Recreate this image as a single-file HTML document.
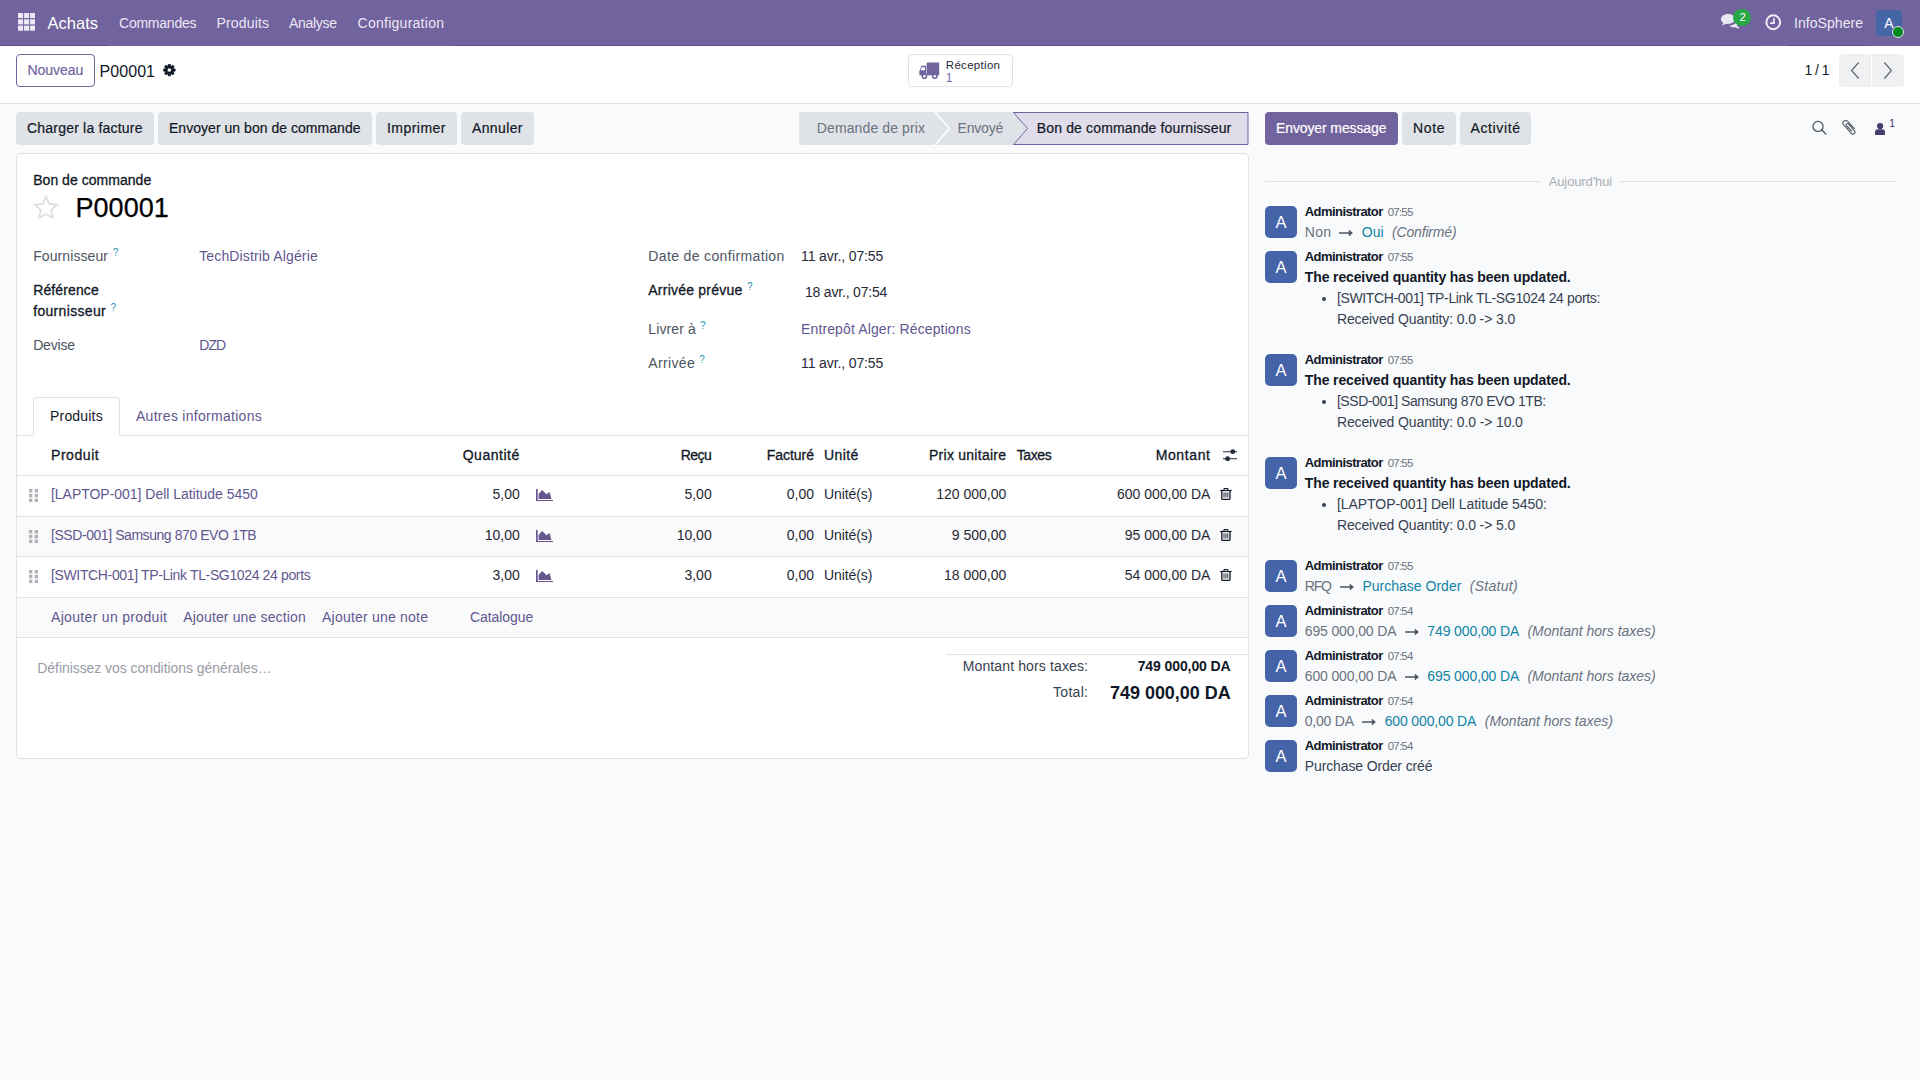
<!DOCTYPE html>
<html lang="fr">
<head>
<meta charset="utf-8">
<title>Odoo - P00001</title>
<style>
*{box-sizing:border-box}
html,body{margin:0;padding:0}
body{width:1920px;height:1080px;overflow:hidden;position:relative;background:#f9fafb;font-family:"Liberation Sans",sans-serif;font-size:14px;color:#374151}
nav,header,main,aside,section,div,span,a,button,svg.i,h1,ul,li,table{position:absolute;margin:0;padding:0}
.t{white-space:nowrap;line-height:1;font-weight:400;text-decoration:none}
button{border:0;font:inherit;cursor:pointer}
.navbar{background:#71639e}
.cp{background:#fff;border-bottom:1px solid #dfe2e6}
.btn{border-radius:4px;background:#dfe2e6}
.btn-primary{background:#71639e}
.btn-outline{background:#fff;border:1px solid #71639e;border-radius:4px}
.sheet{background:#fff;border:1px solid #dfe2e6;border-radius:5px}
.line{background:#dfe2e6}
.avatar{background:#4563a8;border-radius:5px}

</style>
</head>
<body>
<nav class="navbar" style="left:0px;top:0px;width:1920px;height:46px;">
<div class="nb" style="left:0px;top:45px;width:109px;height:1px;background:#5d5286"></div>
<div class="nb" style="left:454px;top:45px;width:1305px;height:1px;background:#5d5286"></div>
<div class="nb" style="left:1787px;top:45px;width:83px;height:1px;background:#5d5286"></div>
<svg class="i" style="left:17.8px;top:13.2px;" width="17.5" height="18" viewBox="0 0 17.5 18"><g fill="#ece9f4"><rect x="0" y="0" width="5.1" height="5.1"/><rect x="6.05" y="0" width="5.1" height="5.1"/><rect x="12.1" y="0" width="5.1" height="5.1"/><rect x="0" y="6.3" width="5.1" height="5.1"/><rect x="6.05" y="6.3" width="5.1" height="5.1"/><rect x="12.1" y="6.3" width="5.1" height="5.1"/><rect x="0" y="12.6" width="5.1" height="5.1"/><rect x="6.05" y="12.6" width="5.1" height="5.1"/><rect x="12.1" y="12.6" width="5.1" height="5.1"/></g></svg>
<a class="t" style="left:47.50px;top:14.50px;letter-spacing:0.009px;font-size:16.5px;color:#fff">Achats</a>
<a class="t" style="left:119.00px;top:16.00px;letter-spacing:-0.234px;color:#ebe8f3">Commandes</a>
<a class="t" style="left:216.50px;top:16.00px;letter-spacing:0.163px;color:#ebe8f3">Produits</a>
<a class="t" style="left:289.00px;top:16.00px;letter-spacing:-0.302px;color:#ebe8f3">Analyse</a>
<a class="t" style="left:357.50px;top:16.00px;letter-spacing:0.268px;color:#ebe8f3">Configuration</a>
<svg class="i" style="left:1721px;top:14px;" width="18" height="16" viewBox="0 0 18 16"><g fill="#e9e6f3"><path d="M7 0C3.1 0 0 2.3 0 5.2c0 1.5.9 2.9 2.3 3.8-.2.9-.7 1.700-1.500 2.400 1.700-.1 3.100-.700 4.200-1.600.600.100 1.300.200 2 .2 3.900 0 7-2.300 7-5.200S10.900 0 7 0z"/><path d="M15.600 12.300c1.400-.900 2.400-2.200 2.400-3.700 0-1.400-.800-2.600-2.100-3.500.100.400.100.700.100 1.100 0 3.200-3.300 5.900-7.600 6.200 1.100 1 2.800 1.600 4.600 1.600.700 0 1.300-.100 1.900-.2 1 .900 2.300 1.500 3.900 1.600-.700-.700-1.200-1.500-1.400-2.400z" transform="translate(0,-.6)"/></g></svg>
<div class="badge" style="left:1732.6px;top:9px;width:18.6px;height:17.2px;border-radius:9px;background:#28a745"></div>
<span class="t" style="left:1739.40px;top:12.00px;font-size:11.5px;color:#fff">2</span>
<svg class="i" style="left:1765px;top:14px;" width="16.5" height="16.5" viewBox="0 0 16.5 16.5"><circle cx="8.25" cy="8.25" r="6.9" fill="none" stroke="#f1eff7" stroke-width="2"/><path d="M8.9 4.200v5h-3.700" fill="none" stroke="#f1eff7" stroke-width="1.7"/></svg>
<a class="t" style="left:1794.00px;top:16.00px;letter-spacing:0.056px;color:#ebe8f3">InfoSphere</a>
<div class="avatar" style="left:1876px;top:10px;width:26px;height:26px;background:#4665a7;border-radius:4px"></div>
<span class="t" style="left:1884.30px;top:16.00px;color:#fff">A</span>
<div class="status" style="left:1892px;top:26px;width:12px;height:12px;border-radius:6px;background:#008a1c;border:1px solid #e6e3ef"></div>
</nav>
<header class="cp" style="left:0px;top:46px;width:1920px;height:58px;">
<button class="btn-outline" style="left:16px;top:8px;width:79px;height:33px;"></button>
<span class="t" style="left:27.50px;top:17.00px;letter-spacing:-0.058px;color:#71639e;-webkit-text-stroke:0.2px currentColor">Nouveau</span>
<span class="t" style="left:99.50px;top:17.70px;letter-spacing:0.066px;font-size:16px;color:#111827">P00001</span>
<svg class="i" style="left:162.4px;top:17.5px;" width="14" height="13" viewBox="0 0 14 13"><path fill="#111827" fill-rule="evenodd" stroke="#111827" stroke-width=".6" stroke-linejoin="round" d="M6.05 1.85 L6.23 0.21 L8.47 0.21 L8.65 1.85 L9.40 2.16 L10.69 1.12 L12.28 2.71 L11.24 4.00 L11.55 4.75 L13.19 4.93 L13.19 7.17 L11.55 7.35 L11.24 8.10 L12.28 9.39 L10.69 10.98 L9.40 9.94 L8.65 10.25 L8.47 11.89 L6.23 11.89 L6.05 10.25 L5.30 9.94 L4.01 10.98 L2.42 9.39 L3.46 8.10 L3.15 7.35 L1.51 7.17 L1.51 4.93 L3.15 4.75 L3.46 4.00 L2.42 2.71 L4.01 1.12 L5.30 2.16Z M5.25 6.05a2.1 2.1 0 1 0 4.2 0a2.1 2.1 0 1 0 -4.2 0Z"/></svg>
<button class="stat" style="left:908px;top:8px;width:105px;height:33px;border:1px solid #dfe2e6;border-radius:4px;background:#fff"></button>
<svg class="i" style="left:919.4px;top:16.1px;" width="21" height="17.2" viewBox="0 0 21 17.200"><g fill="#71639e"><path d="M8.400.400H19.500a.7.700 0 0 1 .7.700V13.300H7.600V1.200a.8.800 0 0 1 .8-.8z"/><path fill-rule="evenodd" d="M7.100 3.800V13.300H.3V9.300L2 4.900c.2-.6.700-1.100 1.400-1.100zM5.900 5.200H3.300c-.3 0-.5.200-.6.400L1.600 8.300H5.900z"/><circle cx="5.400" cy="14.200" r="2.900"/><circle cx="15.800" cy="14.200" r="2.900"/><circle cx="5.400" cy="14.200" r="1.300" fill="#fff"/><circle cx="15.800" cy="14.200" r="1.300" fill="#fff"/></g></svg>
<span class="t" style="left:945.80px;top:13.80px;letter-spacing:0.300px;font-size:11.5px;color:#1f2937">Réception</span>
<span class="t" style="left:945.80px;top:25.70px;font-size:12px;color:#71639e">1</span>
<span class="t" style="left:1804.50px;top:16.70px;letter-spacing:-0.562px;color:#111827">1 / 1</span>
<button class="pg" style="left:1839px;top:8px;width:32px;height:33px;background:#eff0f2;border-radius:4px 0 0 4px"></button>
<button class="pg" style="left:1872px;top:8px;width:32px;height:33px;background:#eff0f2;border-radius:0 4px 4px 0"></button>
<svg class="i" style="left:1850.3px;top:16.4px;" width="10" height="17" viewBox="0 0 10 17"><path d="M8.600.500L1.600 8.500l7 8" fill="none" stroke="#5c6370" stroke-width="1.150"/></svg>
<svg class="i" style="left:1883.2px;top:16.4px;" width="10" height="17" viewBox="0 0 10 17"><path d="M1.400.500L8.400 8.500l-7 8" fill="none" stroke="#5c6370" stroke-width="1.150"/></svg>
</header>
<main class="form" style="left:0px;top:104px;width:1256px;height:976px;">
<button class="btn" style="left:16px;top:8px;width:137.7px;height:33px;"></button>
<span class="t" style="left:27.00px;top:17.00px;letter-spacing:0.202px;color:#111827;-webkit-text-stroke:0.2px currentColor">Charger la facture</span>
<button class="btn" style="left:158px;top:8px;width:213.7px;height:33px;"></button>
<span class="t" style="left:169.00px;top:17.00px;letter-spacing:0.033px;color:#111827;-webkit-text-stroke:0.2px currentColor">Envoyer un bon de commande</span>
<button class="btn" style="left:376px;top:8px;width:81px;height:33px;"></button>
<span class="t" style="left:387.00px;top:17.00px;letter-spacing:0.467px;color:#111827;-webkit-text-stroke:0.2px currentColor">Imprimer</span>
<button class="btn" style="left:461px;top:8px;width:72.7px;height:33px;"></button>
<span class="t" style="left:472.00px;top:17.00px;letter-spacing:0.372px;color:#111827;-webkit-text-stroke:0.2px currentColor">Annuler</span>
<svg class="i" style="left:799px;top:8px" width="450" height="33" viewBox="0 0 450 33"><path d="M3 0H214L228 16.500 214 33H3a3 3 0 0 1-3-3V3a3 3 0 0 1 3-3z" fill="#dfe2e6"/><path d="M136 0l14.500 16.500L136 33" fill="none" stroke="#fff" stroke-width="1.600"/><path d="M214.500.500H449V32.500H214.500L228.500 16.500z" fill="#e0dcea" stroke="#71639e" stroke-width="1"/></svg>
<span class="t" style="left:816.80px;top:17.00px;letter-spacing:0.113px;color:#6b7280">Demande de prix</span>
<span class="t" style="left:957.50px;top:17.00px;letter-spacing:-0.181px;color:#6b7280">Envoyé</span>
<span class="t" style="left:1036.80px;top:17.00px;letter-spacing:0.147px;color:#111827;-webkit-text-stroke:0.2px currentColor">Bon de commande fournisseur</span>
<section class="sheet" style="left:16px;top:49px;width:1232.5px;height:606px;"></section>
<span class="t" style="left:33.20px;top:69.00px;letter-spacing:0.033px;color:#111827;-webkit-text-stroke:0.3px currentColor">Bon de commande</span>
<svg class="i" style="left:32px;top:90.1px;" width="28" height="28" viewBox="0 0 28 28"><path fill="#dcdfe3" fill-rule="evenodd" d="M14.00 0.60 L17.88 8.96 L27.03 10.07 L20.28 16.34 L22.05 25.38 L14.00 20.90 L5.95 25.38 L7.72 16.34 L0.97 10.07 L10.12 8.96Z M14.00 5.10 L16.65 10.76 L22.84 11.53 L18.28 15.79 L19.47 21.92 L14.00 18.90 L8.53 21.92 L9.72 15.79 L5.16 11.53 L11.35 10.76Z"/></svg>
<h1 class="t" style="left:75.50px;top:91.40px;letter-spacing:0.041px;font-size:27px;color:#000;-webkit-text-stroke:0.25px currentColor">P00001</h1>
<span class="t" style="left:33.20px;top:144.60px;letter-spacing:0.088px;color:#4b5563">Fournisseur</span>
<span class="t" style="left:112.70px;top:144.00px;font-size:10px;color:#2a93b5">?</span>
<a class="t" style="left:199.20px;top:144.60px;letter-spacing:0.142px;color:#5f5790">TechDistrib Algérie</a>
<span class="t" style="left:33.20px;top:179.00px;letter-spacing:0.113px;color:#111827;-webkit-text-stroke:0.3px currentColor">Référence</span>
<span class="t" style="left:33.20px;top:199.50px;letter-spacing:0.323px;color:#111827;-webkit-text-stroke:0.3px currentColor">fournisseur</span>
<span class="t" style="left:110.50px;top:198.90px;font-size:10px;color:#2a93b5">?</span>
<span class="t" style="left:33.20px;top:233.50px;letter-spacing:-0.199px;color:#4b5563">Devise</span>
<a class="t" style="left:199.20px;top:233.50px;letter-spacing:-0.891px;color:#5f5790">DZD</a>
<span class="t" style="left:648.30px;top:144.50px;letter-spacing:0.359px;color:#4b5563">Date de confirmation</span>
<span class="t" style="left:801.00px;top:144.50px;letter-spacing:-0.116px;color:#1f2937">11 avr., 07:55</span>
<span class="t" style="left:648.30px;top:179.00px;letter-spacing:0.227px;color:#111827;-webkit-text-stroke:0.3px currentColor">Arrivée prévue</span>
<span class="t" style="left:747.00px;top:178.40px;font-size:10px;color:#2a93b5">?</span>
<span class="t" style="left:805.00px;top:180.70px;letter-spacing:-0.196px;color:#1f2937">18 avr., 07:54</span>
<span class="t" style="left:648.30px;top:217.70px;letter-spacing:0.102px;color:#4b5563">Livrer à</span>
<span class="t" style="left:700.00px;top:217.10px;font-size:10px;color:#2a93b5">?</span>
<a class="t" style="left:801.00px;top:217.70px;letter-spacing:0.126px;color:#5f5790">Entrepôt Alger: Réceptions</a>
<span class="t" style="left:648.30px;top:252.00px;letter-spacing:0.340px;color:#4b5563">Arrivée</span>
<span class="t" style="left:699.30px;top:251.40px;font-size:10px;color:#2a93b5">?</span>
<span class="t" style="left:801.00px;top:252.00px;letter-spacing:-0.116px;color:#1f2937">11 avr., 07:55</span>
<div class="line" style="left:17px;top:331px;width:1230.5px;height:1px;"></div>
<div class="tab" style="left:33px;top:293px;width:86.5px;height:39px;border:1px solid #dfe2e6;border-bottom:0;border-radius:4px 4px 0 0;background:#fff"></div>
<span class="t" style="left:50.00px;top:304.70px;letter-spacing:0.192px;color:#111827">Produits</span>
<a class="t" style="left:136.00px;top:304.70px;letter-spacing:0.283px;color:#5f5790">Autres informations</a>
<span class="t" style="left:51.00px;top:344.00px;letter-spacing:0.557px;color:#111827;-webkit-text-stroke:0.3px currentColor">Produit</span>
<span class="t" style="left:462.70px;top:344.00px;letter-spacing:0.523px;color:#111827;-webkit-text-stroke:0.3px currentColor">Quantité</span>
<span class="t" style="left:680.70px;top:344.00px;letter-spacing:-0.562px;color:#111827;-webkit-text-stroke:0.3px currentColor">Reçu</span>
<span class="t" style="left:766.70px;top:344.00px;letter-spacing:-0.028px;color:#111827;-webkit-text-stroke:0.3px currentColor">Facturé</span>
<span class="t" style="left:824.00px;top:344.00px;letter-spacing:0.403px;color:#111827;-webkit-text-stroke:0.3px currentColor">Unité</span>
<span class="t" style="left:929.00px;top:344.00px;letter-spacing:0.257px;color:#111827;-webkit-text-stroke:0.3px currentColor">Prix unitaire</span>
<span class="t" style="left:1016.70px;top:344.00px;letter-spacing:-0.395px;color:#111827;-webkit-text-stroke:0.3px currentColor">Taxes</span>
<span class="t" style="left:1155.70px;top:344.00px;letter-spacing:0.618px;color:#111827;-webkit-text-stroke:0.3px currentColor">Montant</span>
<svg class="i" style="left:1223.1px;top:344.8px;" width="14.4" height="12.4" viewBox="0 0 14.4 12.400"><path d="M0 2.700h14.400M0 9.700h14.400" fill="none" stroke="#1f2937" stroke-width="1.100"/><circle cx="9.800" cy="2.700" r="2.400" fill="#1f2937"/><circle cx="4.600" cy="9.700" r="2.400" fill="#1f2937"/></svg>
<div class="line" style="left:17px;top:371px;width:1230.5px;height:1px;"></div>
<svg class="i" style="left:29.1px;top:384.9px;" width="9" height="13.2" viewBox="0 0 9 13.2"><rect x="0" y="0" width="3.3" height="3.5" fill="#adb1b8"/><rect x="5.7" y="0" width="3.3" height="3.5" fill="#adb1b8"/><rect x="0" y="4.85" width="3.3" height="3.5" fill="#adb1b8"/><rect x="5.7" y="4.85" width="3.3" height="3.5" fill="#adb1b8"/><rect x="0" y="9.7" width="3.3" height="3.5" fill="#adb1b8"/><rect x="5.7" y="9.7" width="3.3" height="3.5" fill="#adb1b8"/></svg>
<a class="t" style="left:51.00px;top:383.00px;letter-spacing:-0.028px;color:#5f5790">[LAPTOP-001] Dell Latitude 5450</a>
<span class="t" style="left:492.55px;top:383.00px;color:#1f2937">5,00</span>
<svg class="i" style="left:536.1px;top:385px;" width="17" height="12" viewBox="0 0 17 12"><path d="M0 0h1.700v11H17v1H0z" fill="#66588f"/><path d="M2.600 9.900V5L6.100 1.100l4.400 4.200 3.100-2.200 1.800 6.800z" fill="#66588f"/></svg>
<span class="t" style="left:684.45px;top:383.00px;color:#1f2937">5,00</span>
<span class="t" style="left:786.75px;top:383.00px;color:#1f2937">0,00</span>
<span class="t" style="left:824.00px;top:383.00px;letter-spacing:-0.102px;color:#1f2937">Unité(s)</span>
<span class="t" style="left:936.22px;top:383.00px;color:#1f2937">120 000,00</span>
<span class="t" style="left:1116.99px;top:383.00px;color:#1f2937">600 000,00 DA</span>
<svg class="i" style="left:1220.1px;top:384px;" width="12" height="12" viewBox="0 0 12 12"><g fill="none" stroke="#111827"><path d="M4 2.300V1.100a.6.6 0 0 1 .6-.6h2.600a.6.6 0 0 1 .6.600V2.300" stroke-width="1.100"/><path d="M.2 2.500H11.600" stroke-width="1.200"/><path d="M1.800 3V10.400a1 1 0 0 0 1 1H9a1 1 0 0 0 1-1V3" stroke-width="1.300"/><path d="M4 4.400V9.500M5.900 4.400V9.500M7.800 4.400V9.500" stroke-width=".9"/></g></svg>
<div class="line" style="left:17px;top:412px;width:1230.5px;height:1px;"></div>
<div class="stripe" style="left:17px;top:413px;width:1230.5px;height:39px;background:#fafafb"></div>
<svg class="i" style="left:29.1px;top:425.9px;" width="9" height="13.2" viewBox="0 0 9 13.2"><rect x="0" y="0" width="3.3" height="3.5" fill="#adb1b8"/><rect x="5.7" y="0" width="3.3" height="3.5" fill="#adb1b8"/><rect x="0" y="4.85" width="3.3" height="3.5" fill="#adb1b8"/><rect x="5.7" y="4.85" width="3.3" height="3.5" fill="#adb1b8"/><rect x="0" y="9.7" width="3.3" height="3.5" fill="#adb1b8"/><rect x="5.7" y="9.7" width="3.3" height="3.5" fill="#adb1b8"/></svg>
<a class="t" style="left:51.00px;top:424.00px;letter-spacing:-0.435px;color:#5f5790">[SSD-001] Samsung 870 EVO 1TB</a>
<span class="t" style="left:484.75px;top:424.00px;color:#1f2937">10,00</span>
<svg class="i" style="left:536.1px;top:426px;" width="17" height="12" viewBox="0 0 17 12"><path d="M0 0h1.700v11H17v1H0z" fill="#66588f"/><path d="M2.600 9.900V5L6.100 1.100l4.400 4.200 3.100-2.200 1.800 6.800z" fill="#66588f"/></svg>
<span class="t" style="left:676.65px;top:424.00px;color:#1f2937">10,00</span>
<span class="t" style="left:786.75px;top:424.00px;color:#1f2937">0,00</span>
<span class="t" style="left:824.00px;top:424.00px;letter-spacing:-0.102px;color:#1f2937">Unité(s)</span>
<span class="t" style="left:951.80px;top:424.00px;color:#1f2937">9 500,00</span>
<span class="t" style="left:1124.78px;top:424.00px;color:#1f2937">95 000,00 DA</span>
<svg class="i" style="left:1220.1px;top:425px;" width="12" height="12" viewBox="0 0 12 12"><g fill="none" stroke="#111827"><path d="M4 2.300V1.100a.6.6 0 0 1 .6-.6h2.600a.6.6 0 0 1 .6.600V2.300" stroke-width="1.100"/><path d="M.2 2.500H11.600" stroke-width="1.200"/><path d="M1.800 3V10.400a1 1 0 0 0 1 1H9a1 1 0 0 0 1-1V3" stroke-width="1.300"/><path d="M4 4.400V9.500M5.900 4.400V9.500M7.800 4.400V9.500" stroke-width=".9"/></g></svg>
<div class="line" style="left:17px;top:452px;width:1230.5px;height:1px;"></div>
<svg class="i" style="left:29.1px;top:465.9px;" width="9" height="13.2" viewBox="0 0 9 13.2"><rect x="0" y="0" width="3.3" height="3.5" fill="#adb1b8"/><rect x="5.7" y="0" width="3.3" height="3.5" fill="#adb1b8"/><rect x="0" y="4.85" width="3.3" height="3.5" fill="#adb1b8"/><rect x="5.7" y="4.85" width="3.3" height="3.5" fill="#adb1b8"/><rect x="0" y="9.7" width="3.3" height="3.5" fill="#adb1b8"/><rect x="5.7" y="9.7" width="3.3" height="3.5" fill="#adb1b8"/></svg>
<a class="t" style="left:51.00px;top:464.00px;letter-spacing:-0.360px;color:#5f5790">[SWITCH-001] TP-Link TL-SG1024 24 ports</a>
<span class="t" style="left:492.55px;top:464.00px;color:#1f2937">3,00</span>
<svg class="i" style="left:536.1px;top:466px;" width="17" height="12" viewBox="0 0 17 12"><path d="M0 0h1.700v11H17v1H0z" fill="#66588f"/><path d="M2.600 9.900V5L6.100 1.100l4.400 4.200 3.100-2.200 1.800 6.800z" fill="#66588f"/></svg>
<span class="t" style="left:684.45px;top:464.00px;color:#1f2937">3,00</span>
<span class="t" style="left:786.75px;top:464.00px;color:#1f2937">0,00</span>
<span class="t" style="left:824.00px;top:464.00px;letter-spacing:-0.102px;color:#1f2937">Unité(s)</span>
<span class="t" style="left:944.00px;top:464.00px;color:#1f2937">18 000,00</span>
<span class="t" style="left:1124.78px;top:464.00px;color:#1f2937">54 000,00 DA</span>
<svg class="i" style="left:1220.1px;top:465px;" width="12" height="12" viewBox="0 0 12 12"><g fill="none" stroke="#111827"><path d="M4 2.300V1.100a.6.6 0 0 1 .6-.6h2.600a.6.6 0 0 1 .6.600V2.300" stroke-width="1.100"/><path d="M.2 2.500H11.600" stroke-width="1.200"/><path d="M1.800 3V10.400a1 1 0 0 0 1 1H9a1 1 0 0 0 1-1V3" stroke-width="1.300"/><path d="M4 4.400V9.500M5.900 4.400V9.500M7.800 4.400V9.500" stroke-width=".9"/></g></svg>
<div class="line" style="left:17px;top:493px;width:1230.5px;height:1px;"></div>
<div class="stripe" style="left:17px;top:494px;width:1230.5px;height:39px;background:#fafafb"></div>
<div class="line" style="left:17px;top:533px;width:1230.5px;height:1px;"></div>
<a class="t" style="left:51.00px;top:505.70px;letter-spacing:0.322px;color:#5f5790">Ajouter un produit</a>
<a class="t" style="left:183.30px;top:505.70px;letter-spacing:0.141px;color:#5f5790">Ajouter une section</a>
<a class="t" style="left:322.00px;top:505.70px;letter-spacing:0.217px;color:#5f5790">Ajouter une note</a>
<a class="t" style="left:470.00px;top:505.70px;letter-spacing:-0.066px;color:#5f5790">Catalogue</a>
<span class="t" style="left:37.30px;top:556.70px;letter-spacing:-0.062px;color:#9a9ca5">Définissez vos conditions générales…</span>
<div class="line" style="left:946px;top:550px;width:302px;height:1px;"></div>
<span class="t" style="left:962.70px;top:554.70px;letter-spacing:0.130px;color:#374151">Montant hors taxes:</span>
<span class="t" style="left:1137.70px;top:554.70px;letter-spacing:-0.099px;color:#111827;font-weight:700">749 000,00 DA</span>
<span class="t" style="left:1053.00px;top:581.30px;letter-spacing:0.306px;color:#374151">Total:</span>
<span class="t" style="left:1110.00px;top:579.70px;letter-spacing:-0.033px;font-size:18px;color:#111827;font-weight:700">749 000,00 DA</span>
</main>
<aside class="chatter" style="left:1256px;top:104px;width:664px;height:976px;">
<button class="btn btn-primary" style="left:9px;top:8px;width:133px;height:33px;"></button>
<span class="t" style="left:20.00px;top:17.00px;letter-spacing:-0.112px;color:#fff;-webkit-text-stroke:0.2px currentColor">Envoyer message</span>
<button class="btn" style="left:146px;top:8px;width:54px;height:33px;"></button>
<span class="t" style="left:157.00px;top:17.00px;letter-spacing:0.641px;color:#111827;-webkit-text-stroke:0.2px currentColor">Note</span>
<button class="btn" style="left:204px;top:8px;width:71px;height:33px;"></button>
<span class="t" style="left:214.50px;top:17.00px;letter-spacing:0.625px;color:#111827;-webkit-text-stroke:0.2px currentColor">Activité</span>
<svg class="i" style="left:556px;top:16.4px;" width="15" height="15" viewBox="0 0 15 15"><circle cx="6" cy="6.400" r="5.050" fill="none" stroke="#4b5563" stroke-width="1.250"/><path d="M9.900 10.100l4 3.900" stroke="#4b5563" stroke-width="1.400" stroke-linecap="round"/></svg>
<svg class="i" style="left:586.2px;top:15px;" width="16" height="16.5" viewBox="0 0 16 16.500"><g transform="translate(7.400 8) rotate(47) translate(-8.250 0)"><path d="M12.500 -2.600H2.900a2.700 2.700 0 0 0 0 5.400H14.300a2 2 0 0 0 0-4H5.200a1.150 1.150 0 0 0 0 2.300H12.500" fill="none" stroke="#4b5563" stroke-width="1.100" stroke-linecap="round"/></g></svg>
<svg class="i" style="left:619px;top:18.8px;" width="10.2" height="12.1" viewBox="0 0 10.200 12.100"><circle cx="5.100" cy="3.100" r="3.100" fill="#473e6e"/><path d="M0 11.200V9.300a3.100 3.100 0 0 1 3.100-3.100h4a3.100 3.100 0 0 1 3.100 3.100v1.900a.9.900 0 0 1-.9.900H.9a.9.900 0 0 1-.9-.9z" fill="#473e6e"/></svg>
<span class="t" style="left:633.30px;top:14.00px;font-size:10.5px;color:#3f3766">1</span>
<div class="line" style="left:9px;top:77px;width:274.6px;height:1px;"></div>
<div class="line" style="left:364px;top:77px;width:276px;height:1px;"></div>
<span class="t" style="left:292.70px;top:70.80px;letter-spacing:-0.114px;font-size:13px;color:#a9adb5">Aujourd'hui</span>
<div class="avatar" style="left:9px;top:102px;width:32px;height:32px;"></div>
<span class="t" style="left:19.50px;top:110.20px;font-size:16.5px;color:#fff">A</span>
<span class="t" style="left:48.80px;top:101.20px;letter-spacing:-0.561px;font-size:13px;color:#111827;font-weight:700">Administrator</span>
<span class="t" style="left:131.80px;top:103.20px;letter-spacing:-0.820px;font-size:11.5px;color:#6b7280">07:55</span>
<span class="t" style="left:48.80px;top:121.00px;letter-spacing:0.256px;color:#6b7280">Non</span>
<svg class="i" style="left:83px;top:124.7px;" width="14" height="8" viewBox="0 0 14 8"><path d="M0 4h12.800" fill="none" stroke="#4b5563" stroke-width="1.500"/><path d="M10.200 1.200L13.400 4l-3.200 2.800z" fill="#4b5563" stroke="#4b5563" stroke-width=".8" stroke-linejoin="round"/></svg>
<span class="t" style="left:105.70px;top:121.00px;letter-spacing:0.052px;color:#0f84a5">Oui</span>
<span class="t" style="left:136.00px;top:121.00px;letter-spacing:-0.169px;color:#6b7280;font-style:italic">(Confirmé)</span>
<div class="avatar" style="left:9px;top:147px;width:32px;height:32px;"></div>
<span class="t" style="left:19.50px;top:155.20px;font-size:16.5px;color:#fff">A</span>
<span class="t" style="left:48.80px;top:146.20px;letter-spacing:-0.561px;font-size:13px;color:#111827;font-weight:700">Administrator</span>
<span class="t" style="left:131.80px;top:148.20px;letter-spacing:-0.820px;font-size:11.5px;color:#6b7280">07:55</span>
<span class="t" style="left:48.80px;top:165.60px;letter-spacing:-0.127px;color:#111827;font-weight:700">The received quantity has been updated.</span>
<div class="dot" style="left:65.7px;top:192.8px;width:4.2px;height:4.2px;border-radius:2.100px;background:#374151"></div>
<span class="t" style="left:80.90px;top:186.60px;letter-spacing:-0.356px;color:#374151">[SWITCH-001] TP-Link TL-SG1024 24 ports:</span>
<span class="t" style="left:80.90px;top:207.60px;letter-spacing:-0.122px;color:#374151">Received Quantity: 0.0 -&gt; 3.0</span>
<div class="avatar" style="left:9px;top:250px;width:32px;height:32px;"></div>
<span class="t" style="left:19.50px;top:258.20px;font-size:16.5px;color:#fff">A</span>
<span class="t" style="left:48.80px;top:249.20px;letter-spacing:-0.561px;font-size:13px;color:#111827;font-weight:700">Administrator</span>
<span class="t" style="left:131.80px;top:251.20px;letter-spacing:-0.820px;font-size:11.5px;color:#6b7280">07:55</span>
<span class="t" style="left:48.80px;top:268.60px;letter-spacing:-0.127px;color:#111827;font-weight:700">The received quantity has been updated.</span>
<div class="dot" style="left:65.7px;top:295.8px;width:4.2px;height:4.2px;border-radius:2.100px;background:#374151"></div>
<span class="t" style="left:80.90px;top:289.60px;letter-spacing:-0.430px;color:#374151">[SSD-001] Samsung 870 EVO 1TB:</span>
<span class="t" style="left:80.90px;top:310.60px;letter-spacing:-0.121px;color:#374151">Received Quantity: 0.0 -&gt; 10.0</span>
<div class="avatar" style="left:9px;top:353px;width:32px;height:32px;"></div>
<span class="t" style="left:19.50px;top:361.20px;font-size:16.5px;color:#fff">A</span>
<span class="t" style="left:48.80px;top:352.20px;letter-spacing:-0.561px;font-size:13px;color:#111827;font-weight:700">Administrator</span>
<span class="t" style="left:131.80px;top:354.20px;letter-spacing:-0.820px;font-size:11.5px;color:#6b7280">07:55</span>
<span class="t" style="left:48.80px;top:371.60px;letter-spacing:-0.127px;color:#111827;font-weight:700">The received quantity has been updated.</span>
<div class="dot" style="left:65.7px;top:398.8px;width:4.2px;height:4.2px;border-radius:2.100px;background:#374151"></div>
<span class="t" style="left:80.90px;top:392.60px;letter-spacing:-0.046px;color:#374151">[LAPTOP-001] Dell Latitude 5450:</span>
<span class="t" style="left:80.90px;top:413.60px;letter-spacing:-0.122px;color:#374151">Received Quantity: 0.0 -&gt; 5.0</span>
<div class="avatar" style="left:9px;top:456px;width:32px;height:32px;"></div>
<span class="t" style="left:19.50px;top:464.20px;font-size:16.5px;color:#fff">A</span>
<span class="t" style="left:48.80px;top:455.20px;letter-spacing:-0.561px;font-size:13px;color:#111827;font-weight:700">Administrator</span>
<span class="t" style="left:131.80px;top:457.20px;letter-spacing:-0.820px;font-size:11.5px;color:#6b7280">07:55</span>
<span class="t" style="left:48.80px;top:475.00px;letter-spacing:-1.200px;color:#6b7280">RFQ</span>
<svg class="i" style="left:84px;top:478.7px;" width="14" height="8" viewBox="0 0 14 8"><path d="M0 4h12.800" fill="none" stroke="#4b5563" stroke-width="1.500"/><path d="M10.200 1.200L13.400 4l-3.200 2.800z" fill="#4b5563" stroke="#4b5563" stroke-width=".8" stroke-linejoin="round"/></svg>
<span class="t" style="left:106.40px;top:475.00px;letter-spacing:0.013px;color:#0f84a5">Purchase Order</span>
<span class="t" style="left:213.80px;top:475.00px;letter-spacing:0.271px;color:#6b7280;font-style:italic">(Statut)</span>
<div class="avatar" style="left:9px;top:501px;width:32px;height:32px;"></div>
<span class="t" style="left:19.50px;top:509.20px;font-size:16.5px;color:#fff">A</span>
<span class="t" style="left:48.80px;top:500.20px;letter-spacing:-0.561px;font-size:13px;color:#111827;font-weight:700">Administrator</span>
<span class="t" style="left:131.80px;top:502.20px;letter-spacing:-0.820px;font-size:11.5px;color:#6b7280">07:54</span>
<span class="t" style="left:48.80px;top:520.00px;letter-spacing:-0.142px;color:#6b7280">695 000,00 DA</span>
<svg class="i" style="left:149px;top:523.7px;" width="14" height="8" viewBox="0 0 14 8"><path d="M0 4h12.800" fill="none" stroke="#4b5563" stroke-width="1.500"/><path d="M10.200 1.200L13.400 4l-3.200 2.800z" fill="#4b5563" stroke="#4b5563" stroke-width=".8" stroke-linejoin="round"/></svg>
<span class="t" style="left:171.30px;top:520.00px;letter-spacing:-0.109px;color:#0f84a5">749 000,00 DA</span>
<span class="t" style="left:271.40px;top:520.00px;color:#6b7280;font-style:italic">(Montant hors taxes)</span>
<div class="avatar" style="left:9px;top:546px;width:32px;height:32px;"></div>
<span class="t" style="left:19.50px;top:554.20px;font-size:16.5px;color:#fff">A</span>
<span class="t" style="left:48.80px;top:545.20px;letter-spacing:-0.561px;font-size:13px;color:#111827;font-weight:700">Administrator</span>
<span class="t" style="left:131.80px;top:547.20px;letter-spacing:-0.820px;font-size:11.5px;color:#6b7280">07:54</span>
<span class="t" style="left:48.80px;top:565.00px;letter-spacing:-0.142px;color:#6b7280">600 000,00 DA</span>
<svg class="i" style="left:149px;top:568.7px;" width="14" height="8" viewBox="0 0 14 8"><path d="M0 4h12.800" fill="none" stroke="#4b5563" stroke-width="1.500"/><path d="M10.200 1.200L13.400 4l-3.200 2.800z" fill="#4b5563" stroke="#4b5563" stroke-width=".8" stroke-linejoin="round"/></svg>
<span class="t" style="left:171.30px;top:565.00px;letter-spacing:-0.109px;color:#0f84a5">695 000,00 DA</span>
<span class="t" style="left:271.40px;top:565.00px;color:#6b7280;font-style:italic">(Montant hors taxes)</span>
<div class="avatar" style="left:9px;top:591px;width:32px;height:32px;"></div>
<span class="t" style="left:19.50px;top:599.20px;font-size:16.5px;color:#fff">A</span>
<span class="t" style="left:48.80px;top:590.20px;letter-spacing:-0.561px;font-size:13px;color:#111827;font-weight:700">Administrator</span>
<span class="t" style="left:131.80px;top:592.20px;letter-spacing:-0.820px;font-size:11.5px;color:#6b7280">07:54</span>
<span class="t" style="left:48.80px;top:610.00px;letter-spacing:-0.232px;color:#6b7280">0,00 DA</span>
<svg class="i" style="left:106px;top:613.7px;" width="14" height="8" viewBox="0 0 14 8"><path d="M0 4h12.800" fill="none" stroke="#4b5563" stroke-width="1.500"/><path d="M10.200 1.200L13.400 4l-3.200 2.800z" fill="#4b5563" stroke="#4b5563" stroke-width=".8" stroke-linejoin="round"/></svg>
<span class="t" style="left:128.70px;top:610.00px;letter-spacing:-0.142px;color:#0f84a5">600 000,00 DA</span>
<span class="t" style="left:228.80px;top:610.00px;letter-spacing:-0.015px;color:#6b7280;font-style:italic">(Montant hors taxes)</span>
<div class="avatar" style="left:9px;top:636px;width:32px;height:32px;"></div>
<span class="t" style="left:19.50px;top:644.20px;font-size:16.5px;color:#fff">A</span>
<span class="t" style="left:48.80px;top:635.20px;letter-spacing:-0.561px;font-size:13px;color:#111827;font-weight:700">Administrator</span>
<span class="t" style="left:131.80px;top:637.20px;letter-spacing:-0.820px;font-size:11.5px;color:#6b7280">07:54</span>
<span class="t" style="left:48.80px;top:655.00px;letter-spacing:-0.125px;color:#374151">Purchase Order créé</span>
</aside>
</body>
</html>
